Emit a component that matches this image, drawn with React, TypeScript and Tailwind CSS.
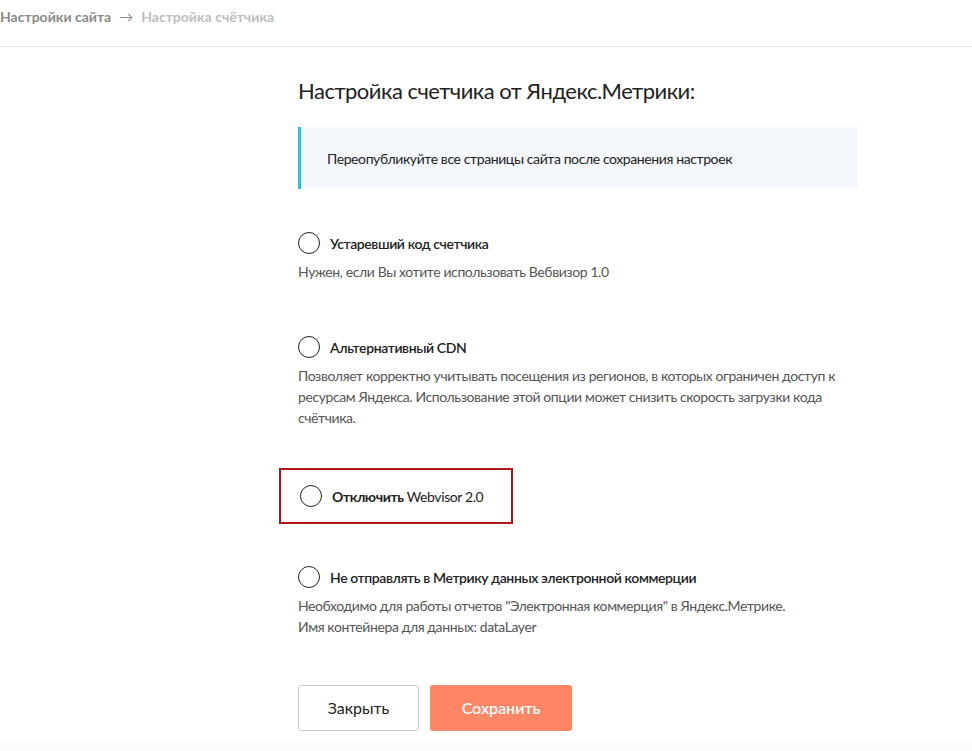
import React from "react";

const font = { fontFamily: "Lato, 'Noto Sans', sans-serif" };

function Radio() {
  return <span className="inline-block w-[22px] h-[22px] rounded-full border-[1.5px] border-[#222] shrink-0" />;
}

function Option({ title, desc }: { title: React.ReactNode; desc?: React.ReactNode }) {
  return (
    <div>
      <div className="flex items-center gap-[10px]">
        <Radio />
        <span className="text-[14px] font-semibold text-[#222] tracking-[-0.4px]">{title}</span>
      </div>
      {desc && <div className="mt-[7px] text-[14px] leading-[21px] text-[#555] tracking-[-0.4px]">{desc}</div>}
    </div>
  );
}

export default function App() {
  return (
    <div className="w-[972px] h-[751px] bg-white flex flex-col" style={font}>
      <div className="h-[47px] border-b border-[#e6e6e6] flex items-start pt-[6px] text-[14px] font-bold">
        <span className="text-[#8a8a8a]">Настройки сайта</span>
        <span className="text-[#8a8a8a] mx-[8px] font-normal">→</span>
        <span className="text-[#bdbdbd]">Настройка счётчика</span>
      </div>
      <div className="flex-1 pl-[298px] pr-[114px]">
        <h1 className="mt-[31px] text-[22px] leading-[26px] text-[#222] font-normal tracking-[-0.5px]">Настройка счетчика от Яндекс.Метрики:</h1>
        <div className="mt-[23px] h-[62px] bg-[#f5f9fe] border-l-[3px] border-[#26c6e0] flex items-center pl-[26px] text-[14px] text-[#222] tracking-[-0.4px]">
          Переопубликуйте все страницы сайта после сохранения настроек
        </div>
        <div className="mt-[43px]">
          <Option title="Устаревший код счетчика" desc="Нужен, если Вы хотите использовать Вебвизор 1.0" />
        </div>
        <div className="mt-[54px]">
          <Option
            title="Альтернативный CDN"
            desc={<>Позволяет корректно учитывать посещения из регионов, в которых ограничен доступ к ресурсам Яндекса. Использование этой опции может снизить скорость загрузки кода счётчика.</>}
          />
        </div>
        <div className="mt-[40px] -ml-[19px] w-[234px] h-[56px] border-2 border-[#b5121b] flex items-center pl-[19px]">
          <div className="flex items-center gap-[10px]">
            <Radio />
            <span className="text-[14px] text-[#222] tracking-[-0.4px]"><b className="font-bold">Отключить</b> Webvisor 2.0</span>
          </div>
        </div>
        <div className="mt-[42px]">
          <Option
            title="Не отправлять в Метрику данных электронной коммерции"
            desc={<>Необходимо для работы отчетов "Электронная коммерция" в Яндекс.Метрике.<br />Имя контейнера для данных: dataLayer</>}
          />
        </div>
        <div className="mt-[48px] flex gap-[11px]">
          <button className="w-[121px] h-[46px] border border-[#cccccc] rounded-[3px] bg-white text-[16px] text-[#222]">Закрыть</button>
          <button className="w-[142px] h-[46px] rounded-[3px] bg-[#fe8667] text-[16px] font-semibold text-white">Сохранить</button>
        </div>
      </div>
      <div className="h-[10px] bg-[#fcfcfc]" />
    </div>
  );
}
